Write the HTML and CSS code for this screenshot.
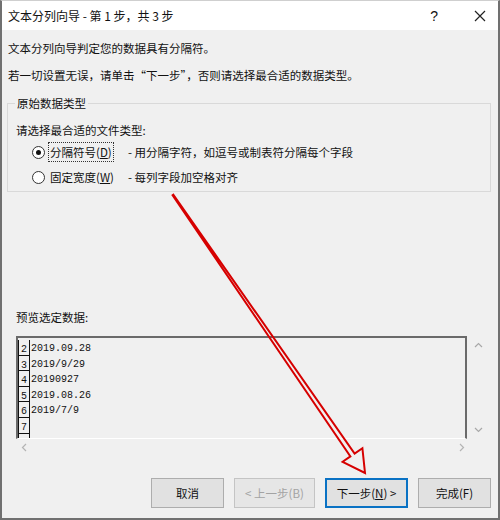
FILE: index.html
```html
<!DOCTYPE html>
<html lang="zh-CN">
<head>
  <meta charset="UTF-8" />
  <title>文本分列向导</title>
  <link rel="stylesheet" href="styles.css">
</head>
<body>
  <div class="janela">
    <div class="titulo">
      <span>文本分列向导 - 第 1 步，共 3 步</span>
      <div class="titulo-botoes">
        <span class="ajuda">?</span>
        <svg class="fechar" width="12" height="12" viewBox="0 0 12 12"><path d="M1 1L11 11M11 1L1 11" stroke="#222" stroke-width="1.2" fill="none"/></svg>
      </div>
    </div>

    <div class="conteudo">
      <p class="linha primeira">文本分列向导判定您的数据具有分隔符。</p>
      <p class="linha segunda">若一切设置无误，请单击“下一步”，否则请选择最合适的数据类型。</p>

      <fieldset class="grupo">
        <legend>原始数据类型</legend>
        <div class="linha">请选择最合适的文件类型:</div>
        <div class="opcao primeira-opcao">
          <span class="radio marcado"></span>
          <span class="rotulo"><span class="foco">分隔符号(<u>D</u>)</span></span>
          <span class="desc">- 用分隔字符，如逗号或制表符分隔每个字段</span>
        </div>
        <div class="opcao">
          <span class="radio"></span>
          <span class="rotulo"><span class="sem-foco">固定宽度(<u>W</u>)</span></span>
          <span class="desc">- 每列字段加空格对齐</span>
        </div>
      </fieldset>

      <div class="linha preview-titulo">预览选定数据:</div>

      <div class="preview">
        <div class="dados">
          <div class="row"><span class="num">2</span><span class="val">2019.09.28</span></div>
          <div class="row"><span class="num">3</span><span class="val">2019/9/29</span></div>
          <div class="row"><span class="num">4</span><span class="val">20190927</span></div>
          <div class="row"><span class="num">5</span><span class="val">2019.08.26</span></div>
          <div class="row"><span class="num">6</span><span class="val">2019/7/9</span></div>
          <div class="row"><span class="num">7</span><span class="val"></span></div>
          <div class="row"><span class="num"></span><span class="val"></span></div>
        </div>
        <div class="vscroll">
          <svg width="9" height="6" viewBox="0 0 9 6"><path d="M1 5L4.5 1.5L8 5" stroke="#a8a8a8" stroke-width="1.2" fill="none"/></svg>
          <svg width="9" height="6" viewBox="0 0 9 6"><path d="M1 1L4.5 4.5L8 1" stroke="#a8a8a8" stroke-width="1.2" fill="none"/></svg>
        </div>
      </div>
      <div class="hscroll">
        <svg width="6" height="9" viewBox="0 0 6 9"><path d="M5 1L1.5 4.5L5 8" stroke="#b4b4b4" stroke-width="1.2" fill="none"/></svg>
        <svg width="6" height="9" viewBox="0 0 6 9"><path d="M1 1L4.5 4.5L1 8" stroke="#b4b4b4" stroke-width="1.2" fill="none"/></svg>
      </div>

      <div class="botoes">
        <button>取消</button>
        <button class="desativado">&lt; 上一步(B)</button>
        <button class="padrao">下一步(<u>N</u>) &gt;</button>
        <button>完成(F)</button>
      </div>
    </div>

    <svg class="seta" width="500" height="520" viewBox="0 0 500 520">
      <polygon points="171.4,193.7 352.6,452.6 360.4,447.2 363,472 340.6,460.8 348.4,455.4 170.6,194.3"
               fill="none" stroke="#d60000" stroke-width="2" stroke-linejoin="miter"/>
    </svg>
  </div>
</body>
</html>
```

FILE: styles.css
```css
body {
  margin: 0;
  background: #f0f0f0;
  font-family: "Noto Sans CJK SC", "Liberation Sans", sans-serif;
  font-size: 11.5px;
  color: #111;
}
.janela {
  position: relative;
  width: 500px;
  height: 520px;
  box-sizing: border-box;
  border: 2px solid #707070;
  border-top: 1px solid #cfcfcf;
  overflow: hidden;
}
.titulo {
  height: 29px;
  background: #fff;
  display: flex;
  align-items: center;
  justify-content: space-between;
  padding-left: 6px;
  font-size: 12px;
}
.titulo-botoes {
  display: flex;
  align-items: center;
  gap: 36px;
  padding-right: 12px;
}
.ajuda {
  font-family: "Liberation Sans", sans-serif;
  font-size: 14px;
}
.conteudo {
  padding: 0 7px 0 6px;
}
.linha {
  line-height: 16px;
  margin: 0;
}
.primeira {
  margin-top: 10px;
}
.segunda {
  margin-top: 11px;
}
.grupo {
  margin: 12px 0 0 -1px;
  padding: 11px 8px 4px 8px;
  border: 1px solid #d9d9d9;
}
.grupo legend {
  padding: 0 2px;
  margin-left: -1px;
  line-height: 16px;
}
.opcao {
  display: flex;
  align-items: center;
  height: 20px;
  margin-top: 5px;
}
.primeira-opcao {
  margin-top: 4px;
}
.radio {
  width: 11px;
  height: 11px;
  border: 1px solid #333;
  border-radius: 50%;
  background: #fff;
  margin-left: 16px;
  position: relative;
  flex-shrink: 0;
}
.marcado::after {
  content: "";
  position: absolute;
  left: 3px;
  top: 3px;
  width: 5px;
  height: 5px;
  border-radius: 50%;
  background: #111;
}
.rotulo {
  width: 80px;
  margin-left: 3px;
}
.foco {
  border: 1px dotted #333;
  padding: 1px 1px;
}
.sem-foco {
  padding: 1px 2px;
}
.desc {
  white-space: nowrap;
}
.preview-titulo {
  margin-top: 117px;
  padding-left: 8px;
}
.preview {
  display: flex;
  margin: 11px 0 0 8px;
  height: 103px;
}
.dados {
  width: 447px;
  border: 2px solid #6a6a6a;
  border-bottom: 1px solid #fff;
  padding-top: 2px;
  overflow: hidden;
  font-family: "Liberation Mono", monospace;
  font-size: 10px;
}
.row {
  display: flex;
  height: 15.6px;
}
.num {
  width: 10px;
  border: 1px solid #111;
  border-top: none;
  text-align: center;
  line-height: 19px;
  flex-shrink: 0;
}
.val {
  padding-left: 1px;
  line-height: 17px;
}
.vscroll {
  width: 23px;
  display: flex;
  flex-direction: column;
  align-items: center;
  justify-content: space-between;
  padding: 6px 0 6px;
}
.hscroll {
  display: flex;
  justify-content: space-between;
  align-items: center;
  height: 17px;
  margin-left: 13px;
  width: 444px;
}
.botoes {
  display: flex;
  justify-content: flex-end;
  gap: 10px;
  margin-top: 22px;
}
button {
  height: 30px;
  width: 73px;
  background: #e1e1e1;
  border: 1px solid #adadad;
  font-family: "Noto Sans CJK SC", "Liberation Sans", sans-serif;
  font-size: 11.5px;
  color: #111;
  padding: 0;
}
.desativado {
  width: 81px;
  background: #e6e6e6;
  border-color: #c4c4c4;
  color: #a3a3a3;
}
.padrao {
  width: 83px;
  border: 2px solid #0a72c4;
}
.seta {
  position: absolute;
  left: 0;
  top: 0;
  pointer-events: none;
}
```
